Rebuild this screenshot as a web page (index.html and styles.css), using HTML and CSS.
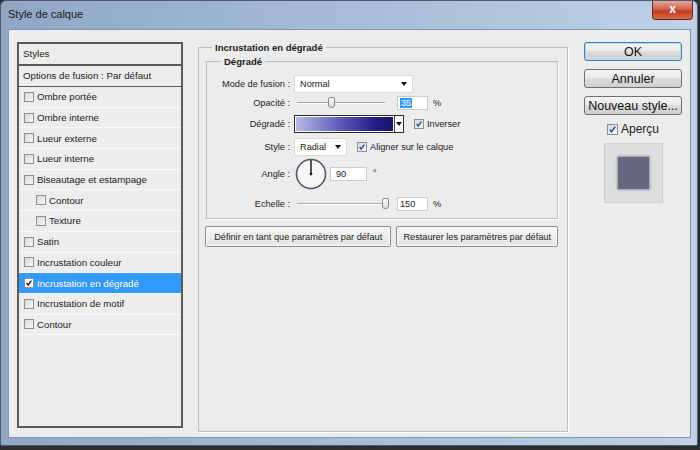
FILE: index.html
```html
<!DOCTYPE html>
<html lang="fr">
<head>
    <meta charset="UTF-8">
    <title>Style de calque</title>
    <link rel="stylesheet" href="styles.css">
</head>
<body>
    <div class="window">
        <div class="titlebar">
            <span class="title">Style de calque</span>
            <span class="close">x</span>
        </div>

        <div class="client">
            <div class="style-list">
                <div class="list-head">Styles</div>
                <div class="list-opts">Options de fusion : Par défaut</div>
                <div class="list-item"><span class="cb"></span>Ombre portée</div>
                <div class="list-item"><span class="cb"></span>Ombre interne</div>
                <div class="list-item"><span class="cb"></span>Lueur externe</div>
                <div class="list-item"><span class="cb"></span>Lueur interne</div>
                <div class="list-item"><span class="cb"></span>Biseautage et estampage</div>
                <div class="list-item sub"><span class="cb"></span>Contour</div>
                <div class="list-item sub"><span class="cb"></span>Texture</div>
                <div class="list-item"><span class="cb"></span>Satin</div>
                <div class="list-item"><span class="cb"></span>Incrustation couleur</div>
                <div class="list-item selected"><span class="cb on"><svg viewBox="0 0 10 10"><path d="M2 5 L4 7.5 L8 2"/></svg></span>Incrustation en dégradé</div>
                <div class="list-item"><span class="cb"></span>Incrustation de motif</div>
                <div class="list-item"><span class="cb"></span>Contour</div>
            </div>

            <fieldset class="group">
                <legend>Incrustation en dégradé</legend>
                <fieldset class="group inner">
                    <legend>Dégradé</legend>
                    <div class="fields">
                        <label>Mode de fusion :</label>
                        <div class="ctrl">
                            <div class="select wide">Normal<span class="arrow"></span></div>
                        </div>

                        <label>Opacité :</label>
                        <div class="ctrl">
                            <div class="slider"><span class="thumb" style="left: 31px"></span></div>
                            <div class="num"><span class="hl">35</span></div>
                            <span class="unit">%</span>
                        </div>

                        <label>Dégradé :</label>
                        <div class="ctrl">
                            <div class="grad">
                                <div class="grad-fill"></div>
                                <div class="grad-btn"><span class="arrow"></span></div>
                            </div>
                            <span class="cb on gap"><svg viewBox="0 0 10 10"><path d="M2 5 L4 7.5 L8 2"/></svg></span>Inverser
                        </div>

                        <label>Style :</label>
                        <div class="ctrl">
                            <div class="select short">Radial<span class="arrow"></span></div>
                            <span class="cb on gap"><svg viewBox="0 0 10 10"><path d="M2 5 L4 7.5 L8 2"/></svg></span>Aligner sur le calque
                        </div>

                        <label>Angle :</label>
                        <div class="ctrl">
                            <svg class="dial" viewBox="0 0 32 32" width="32" height="32">
                                <circle cx="16" cy="16" r="14.5" fill="#f7f7f7" stroke="#505868" stroke-width="1.6"/>
                                <line x1="16" y1="16" x2="16" y2="2" stroke="#222" stroke-width="1.5"/>
                                <circle cx="16" cy="16" r="1.4" fill="#222"/>
                            </svg>
                            <div class="num angle">90</div>
                            <span class="deg">°</span>
                        </div>

                        <label>Echelle :</label>
                        <div class="ctrl">
                            <div class="slider long"><span class="thumb" style="left: 85px"></span></div>
                            <div class="num near">150</div>
                            <span class="unit">%</span>
                        </div>
                    </div>
                </fieldset>

                <div class="default-btns">
                    <button class="small-btn define">Définir en tant que paramètres par défaut</button>
                    <button class="small-btn restore">Restaurer les paramètres par défaut</button>
                </div>
            </fieldset>

            <div class="actions">
                <button class="btn primary">OK</button>
                <button class="btn">Annuler</button>
                <button class="btn">Nouveau style...</button>
                <div class="preview-check"><span class="cb on"><svg viewBox="0 0 10 10"><path d="M2 5 L4 7.5 L8 2"/></svg></span>Aperçu</div>
                <div class="preview"><div class="swatch"></div></div>
            </div>
        </div>
    </div>
</body>
</html>
```

FILE: styles.css
```css
body {
    margin: 0;
    background-color: #2d2d2d;
    font-family: "Liberation Sans", Arial, sans-serif;
    color: #222;
}

.window {
    width: 698px;
    height: 446px;
    box-sizing: border-box;
    display: flex;
    flex-direction: column;
    padding: 0 6px 7px 7px;
    background: linear-gradient(90deg, #8fa7c5, #a8bed8 55%, #bed1e6);
    border: 1px solid #4b5b70;
    border-radius: 6px 6px 2px 2px;
}

.titlebar {
    height: 28px;
    display: flex;
    align-items: flex-start;
}

.title {
    font-size: 11px;
    color: #1b1b1b;
    margin-top: 7px;
}

.close {
    margin-left: auto;
    margin-right: -2px;
    width: 41px;
    height: 19px;
    box-sizing: border-box;
    border: 1px solid #6b2b20;
    border-top: none;
    border-radius: 0 0 4px 4px;
    background: linear-gradient(#e2a89b, #cf5a42 50%, #c2391f 55%, #d66a4c);
    color: #fff;
    font-weight: bold;
    font-size: 12px;
    text-align: center;
    line-height: 16px;
}

.client {
    flex: 1;
    display: flex;
    align-items: flex-start;
    background-color: #ececec;
    border: 1px solid #8497af;
    padding: 12px 0 0 8px;
}

/* left list */
.style-list {
    width: 166px;
    height: 386px;
    box-sizing: border-box;
    border: 2px solid #5a5a5a;
    background-color: #ededed;
    font-size: 9.7px;
}

.list-head,
.list-opts {
    height: 20px;
    line-height: 20px;
    padding-left: 4px;
    border-bottom: 2px solid #5a5a5a;
}

.list-opts {
    border-bottom-width: 1px;
}

.list-item {
    height: 20.7px;
    box-sizing: border-box;
    display: flex;
    align-items: center;
    padding-left: 5px;
    border-bottom: 1px solid #f8f8f8;
}

.list-item.sub {
    padding-left: 17px;
}

.list-item.selected {
    background-color: #3399ff;
    color: #fff;
}

.cb {
    width: 10px;
    height: 10px;
    box-sizing: border-box;
    border: 1px solid #8e8f8f;
    background: linear-gradient(135deg, #d8d8d8, #f8f8f8);
    margin-right: 3px;
    display: inline-flex;
    flex-shrink: 0;
}

.cb svg {
    width: 100%;
    height: 100%;
    fill: none;
    stroke: #2a4f9c;
    stroke-width: 1.8;
}

.selected .cb {
    background: #fff;
}

.selected .cb svg {
    stroke: #222;
}

/* main group */
fieldset.group {
    margin: 0 0 0 15px;
    width: 370px;
    height: 390px;
    box-sizing: border-box;
    min-width: 0;
    padding: 0 9px 0 7px;
    border: 1px solid #bdbdbd;
    box-shadow: 1px 1px 0 #fff;
}

legend {
    font-weight: bold;
    font-size: 9.5px;
    padding: 0 3px;
    margin-left: 6px;
}

fieldset.inner {
    margin: 3px 0 0 0;
    width: auto;
    height: 163px;
    padding: 0;
}

.inner legend {
    margin-left: 14px;
}

.fields {
    display: grid;
    grid-template-columns: 83px auto;
    grid-template-rows: 20px 18px 24px 22px 32px 28px;
    column-gap: 4px;
    align-items: center;
    padding-top: 7px;
    font-size: 9.2px;
}

.fields label {
    text-align: right;
}

.ctrl {
    display: flex;
    align-items: center;
}

.select {
    height: 18px;
    box-sizing: border-box;
    background-color: #fff;
    border: 1px solid #dadada;
    display: flex;
    align-items: center;
    justify-content: space-between;
    padding: 0 5px;
}

.select.wide {
    width: 119px;
}

.select.short {
    width: 53px;
}

.arrow {
    width: 0;
    height: 0;
    border-left: 3.5px solid transparent;
    border-right: 3.5px solid transparent;
    border-top: 4px solid #111;
}

.slider {
    position: relative;
    width: 88px;
    height: 14px;
    margin-left: 3px;
}

.slider.long {
    width: 91px;
}

.slider::before {
    content: "";
    position: absolute;
    left: 0;
    right: 0;
    top: 6px;
    height: 1px;
    background-color: #a8a8a8;
    border-bottom: 1px solid #fff;
}

.thumb {
    position: absolute;
    top: 1px;
    width: 7px;
    height: 11px;
    box-sizing: border-box;
    border: 1px solid #8a8a8a;
    border-radius: 2px 2px 3px 3px;
    background: linear-gradient(#fff, #d8d8d8);
}

.num {
    width: 31px;
    height: 14px;
    box-sizing: border-box;
    border: 1px solid #c4ccd6;
    background-color: #fff;
    margin-left: 12px;
    padding-left: 2px;
    display: flex;
    align-items: center;
}

.num.near {
    margin-left: 9px;
}

.num.angle {
    width: 37px;
    margin-left: 3px;
    padding-left: 5px;
}

.hl {
    background-color: #3399ff;
    color: #fff;
    padding: 0 1px;
}

.unit {
    margin-left: 5px;
}

.deg {
    margin-left: 6px;
    align-self: flex-start;
    margin-top: 10px;
}

.dial {
    margin-left: 1px;
}

.grad {
    width: 110px;
    height: 18px;
    box-sizing: border-box;
    display: flex;
    border: 1px solid #2a2a2a;
}

.grad-fill {
    flex: 1;
    border: 1px solid #fff;
    background: linear-gradient(90deg, #b8b8e8, #5c5cb8 45%, #22228a 80%, #14146c);
}

.grad-btn {
    width: 8px;
    background-color: #fff;
    border-left: 1px solid #444;
    display: flex;
    align-items: center;
    justify-content: center;
}

.grad-btn .arrow {
    border-left-width: 3px;
    border-right-width: 3px;
}

.cb.gap {
    margin-left: 10px;
}

.default-btns {
    display: flex;
    gap: 5px;
    margin-top: 7px;
    margin-left: -1px;
}

.small-btn {
    height: 21px;
    padding: 0;
    font-family: inherit;
    font-size: 9.2px;
    color: #222;
    border: 1px solid #8d8d8d;
    border-radius: 2px;
    background: linear-gradient(#f6f6f6, #e4e4e4);
    box-shadow: inset 0 0 0 1px #fafafa;
}

.small-btn.define {
    width: 188px;
}

.small-btn.restore {
    width: 163px;
}

/* right column */
.actions {
    margin-left: 16px;
    width: 98px;
    display: flex;
    flex-direction: column;
    align-items: center;
}

.btn {
    width: 98px;
    height: 19px;
    margin-bottom: 8px;
    padding: 0;
    font-family: inherit;
    font-size: 12.5px;
    color: #111;
    border: 1px solid #707070;
    border-radius: 3px;
    background: linear-gradient(#f3f3f3, #ebebeb 45%, #dddddd 50%, #cfcfcf);
}

.btn.primary {
    border-color: #3c7fb1;
    box-shadow: inset 0 0 0 1px #a8e2f8;
}

.preview-check {
    display: flex;
    align-items: center;
    font-size: 12px;
    height: 14px;
    margin-top: -1px;
}

.preview-check .cb {
    width: 11px;
    height: 11px;
}

.preview {
    width: 59px;
    height: 60px;
    box-sizing: border-box;
    margin-top: 7px;
    background-color: #dedede;
    border: 1px solid #d0d0d0;
    display: flex;
    align-items: center;
    justify-content: center;
}

.swatch {
    width: 31px;
    height: 32px;
    background-color: #66667f;
    box-shadow: 0 0 2px 1px #9494aa;
}
```
